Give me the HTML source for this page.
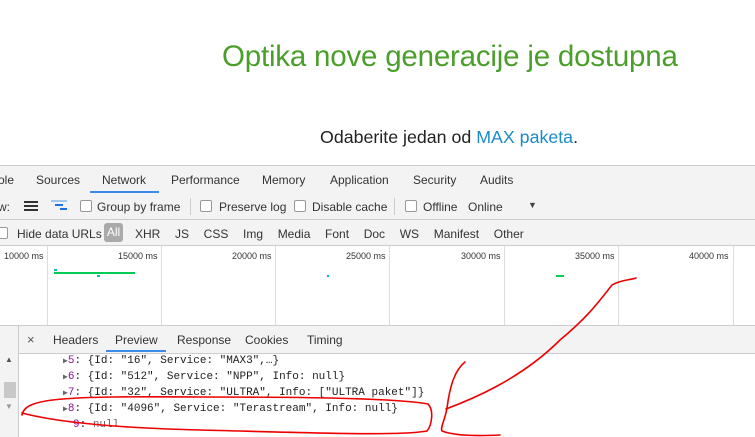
<!DOCTYPE html>
<html><head><style>
body{margin:0;width:755px;height:437px;overflow:hidden;background:#fff;font-family:"Liberation Sans",sans-serif;position:relative}
.a{position:absolute;white-space:nowrap}
.t{font-size:12px;color:#333}
.m{font-family:"Liberation Mono",monospace;font-size:11px;color:#222}
.p{color:#881391}
.cb{position:absolute;width:10px;height:10px;border:1px solid #999;border-radius:2px;background:#fff}
.g{position:absolute;top:246px;height:79px;width:1px;background:#ddd}
.ms{position:absolute;top:251px;font-size:9px;color:#333}
</style></head><body>
<div class="a" style="left:222px;top:40px;font-size:29.5px;color:#4a9e2a;letter-spacing:-0.2px">Optika nove generacije je dostupna</div>
<div class="a" style="left:320px;top:127px;font-size:17.8px;color:#222">Odaberite jedan od <span style="color:#1a8ac8">MAX paketa</span>.</div>

<div class="a" style="left:0;top:165px;width:755px;height:28px;background:#f3f3f3;border-top:1px solid #ccc;border-bottom:1px solid #ccc"></div>
<div class="a t" style="left:-2px;top:173px">ole</div>
<div class="a t" style="left:36px;top:173px">Sources</div>
<div class="a t" style="left:102px;top:173px">Network</div>
<div class="a" style="left:90px;top:191px;width:69px;height:2px;background:#3b8beb"></div>
<div class="a t" style="left:171px;top:173px">Performance</div>
<div class="a t" style="left:262px;top:173px">Memory</div>
<div class="a t" style="left:330px;top:173px">Application</div>
<div class="a t" style="left:413px;top:173px">Security</div>
<div class="a t" style="left:480px;top:173px">Audits</div>

<div class="a" style="left:0;top:194px;width:755px;height:25px;background:#f3f3f3;border-bottom:1px solid #ccc"></div>
<div class="a t" style="left:-2px;top:200px">w:</div>
<div class="a" style="left:24px;top:201px;width:14px;height:10px;background:repeating-linear-gradient(#333 0 2px,transparent 2px 4px)"></div>
<div class="a" style="left:51px;top:200px;width:16px;height:2px;background:#9cc8ef"></div>
<div class="a" style="left:55px;top:204px;width:8px;height:2px;background:#1a73e8"></div>
<div class="a" style="left:60px;top:208px;width:7px;height:2px;background:#1a73e8"></div>
<div class="cb" style="left:80px;top:200px"></div><div class="a t" style="left:97px;top:200px">Group by frame</div>
<div class="a" style="left:190px;top:198px;width:1px;height:17px;background:#ccc"></div>
<div class="cb" style="left:200px;top:200px"></div><div class="a t" style="left:219px;top:200px">Preserve log</div>
<div class="cb" style="left:294px;top:200px"></div><div class="a t" style="left:312px;top:200px">Disable cache</div>
<div class="a" style="left:394px;top:198px;width:1px;height:17px;background:#ccc"></div>
<div class="cb" style="left:405px;top:200px"></div><div class="a t" style="left:423px;top:200px">Offline</div>
<div class="a t" style="left:468px;top:200px">Online</div>
<div class="a" style="left:528px;top:200px;font-size:9px;color:#444">▼</div>

<div class="a" style="left:0;top:220px;width:755px;height:25px;background:#f3f3f3;border-bottom:1px solid #ccc"></div>
<div class="cb" style="left:-4px;top:227px"></div><div class="a t" style="left:17px;top:227px">Hide data URLs</div>
<div class="a" style="left:104px;top:223px;width:19px;height:19px;background:#aaa;border-radius:3px;color:#fff;font-size:12px;text-align:center;line-height:19px">All</div>
<div class="a t" style="left:135px;top:227px;word-spacing:4px">XHR&nbsp; JS&nbsp; CSS&nbsp; Img&nbsp; Media&nbsp; Font&nbsp; Doc&nbsp; WS&nbsp; Manifest&nbsp; Other</div>

<div class="g" style="left:47px"></div><div class="g" style="left:161px"></div><div class="g" style="left:275px"></div><div class="g" style="left:389px"></div><div class="g" style="left:504px"></div><div class="g" style="left:618px"></div><div class="g" style="left:733px"></div>
<div class="ms" style="left:4px">10000 ms</div><div class="ms" style="left:118px">15000 ms</div><div class="ms" style="left:232px">20000 ms</div><div class="ms" style="left:346px">25000 ms</div><div class="ms" style="left:461px">30000 ms</div><div class="ms" style="left:575px">35000 ms</div><div class="ms" style="left:689px">40000 ms</div>
<div class="a" style="left:54px;top:272px;width:81px;height:2px;background:#0c5"></div>
<div class="a" style="left:54px;top:269px;width:3px;height:2px;background:#0bb"></div>
<div class="a" style="left:97px;top:275px;width:3px;height:2px;background:#0bb"></div>
<div class="a" style="left:327px;top:275px;width:2px;height:2px;background:#0bb"></div>
<div class="a" style="left:556px;top:275px;width:8px;height:2px;background:#0c5"></div>

<div class="a" style="left:0;top:325px;width:755px;height:27px;background:#f3f3f3;border-top:1px solid #ccc;border-bottom:1px solid #ccc"></div>
<div class="a" style="left:18px;top:325px;width:1px;height:112px;background:#ccc"></div>
<div class="a" style="left:0;top:353px;width:18px;height:84px;background:#f3f3f3"></div>
<div class="a" style="left:5px;top:355px;font-size:8px;color:#555">▲</div>
<div class="a" style="left:4px;top:382px;width:12px;height:16px;background:#c8c8c8"></div>
<div class="a" style="left:5px;top:402px;font-size:8px;color:#999">▼</div>
<div class="a" style="left:27px;top:332px;font-size:13px;color:#555">×</div>
<div class="a t" style="left:53px;top:333px">Headers</div>
<div class="a t" style="left:115px;top:333px">Preview</div>
<div class="a" style="left:106px;top:350px;width:60px;height:2px;background:#3b8beb"></div>
<div class="a t" style="left:177px;top:333px">Response</div>
<div class="a t" style="left:245px;top:333px">Cookies</div>
<div class="a t" style="left:307px;top:333px">Timing</div>

<div class="a m" style="left:63px;top:355px"><span style="font-size:8px;color:#666">▶</span><span class="p">5</span>: {Id: "16", Service: "MAX3",…}</div>
<div class="a m" style="left:63px;top:371px"><span style="font-size:8px;color:#666">▶</span><span class="p">6</span>: {Id: "512", Service: "NPP", Info: null}</div>
<div class="a m" style="left:63px;top:387px"><span style="font-size:8px;color:#666">▶</span><span class="p">7</span>: {Id: "32", Service: "ULTRA", Info: ["ULTRA paket"]}</div>
<div class="a m" style="left:63px;top:403px"><span style="font-size:8px;color:#666">▶</span><span class="p">8</span>: {Id: "4096", Service: "Terastream", Info: null}</div>
<div class="a m" style="left:73px;top:419px"><span class="p">9</span>: <span style="color:#666">null</span></div>

<svg class="a" style="left:0;top:0" width="755" height="437"><g fill="none" stroke="#e00" stroke-width="1.6" stroke-linecap="round">
<path d="M22 415 C25 398 60 396 200 397 C300 397 395 398 428 404 C434 410 432 425 427 431 C400 436 320 433 200 430 C120 428 60 423 22 413"/>
<path d="M465 362 C455 370 450 385 447 408 C445 420 440 428 442 431 C455 436 480 436 500 435"/>
<path d="M446 409 C470 400 520 380 560 340 C590 315 600 300 612 285 C620 280 630 280 636 278"/>
</g></svg>
</body></html>
